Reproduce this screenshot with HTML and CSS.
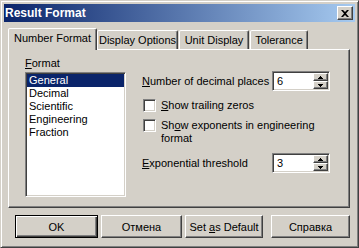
FILE: index.html
```html
<!DOCTYPE html>
<html lang="en">
<head>
    <meta charset="UTF-8">
    <title>Result Format</title>
    <link rel="stylesheet" href="styles.css">
</head>
<body>
    <div class="window">
        <div class="titlebar">
            <span class="title">Result Format</span>
            <div class="close-btn">
                <svg width="8" height="7" viewBox="0 0 8 7" xmlns="http://www.w3.org/2000/svg">
                    <path d="M0 0h2l2 2 2-2h2L5 3.5 8 7H6L4 5 2 7H0l3-3.5z" fill="#000"/>
                </svg>
            </div>
        </div>
        <div class="tabs">
            <div class="tab tab-number active">Number Format</div>
            <div class="tab tab-display">Display Options</div>
            <div class="tab tab-unit">Unit Display</div>
            <div class="tab tab-tolerance">Tolerance</div>
        </div>
        <div class="panel">
            <div class="format-col">
                <div class="field-label"><u>F</u>ormat</div>
                <ul class="listbox">
                    <li class="selected">General</li>
                    <li>Decimal</li>
                    <li>Scientific</li>
                    <li>Engineering</li>
                    <li>Fraction</li>
                </ul>
            </div>
            <div class="options-col">
                <div class="spin-row">
                    <span class="spin-label"><u>N</u>umber of decimal places</span>
                    <div class="spin">
                        <span class="spin-value">6</span>
                        <div class="spin-btns">
                            <span class="spin-btn"><svg width="5" height="3" viewBox="0 0 5 3"><path d="M2 0h1v1H2zM1 1h3v1H1zM0 2h5v1H0z"/></svg></span>
                            <span class="spin-btn"><svg width="5" height="3" viewBox="0 0 5 3"><path d="M0 0h5v1H0zM1 1h3v1H1zM2 2h1v1H2z"/></svg></span>
                        </div>
                    </div>
                </div>
                <div class="check-row check-trailing">
                    <span class="checkbox"></span>
                    <span class="check-label"><u>S</u>how trailing zeros</span>
                </div>
                <div class="check-row check-exponents">
                    <span class="checkbox"></span>
                    <span class="check-label">Sh<u>o</u>w exponents in engineering<br>format</span>
                </div>
                <div class="spin-row threshold-row">
                    <span class="spin-label"><u>E</u>xponential threshold</span>
                    <div class="spin">
                        <span class="spin-value">3</span>
                        <div class="spin-btns">
                            <span class="spin-btn"><svg width="5" height="3" viewBox="0 0 5 3"><path d="M2 0h1v1H2zM1 1h3v1H1zM0 2h5v1H0z"/></svg></span>
                            <span class="spin-btn"><svg width="5" height="3" viewBox="0 0 5 3"><path d="M0 0h5v1H0zM1 1h3v1H1zM2 2h1v1H2z"/></svg></span>
                        </div>
                    </div>
                </div>
            </div>
        </div>
        <div class="buttons">
            <button class="btn btn-ok default">OK</button>
            <button class="btn btn-cancel">Отмена</button>
            <button class="btn btn-default">Set <u>a</u>s Default</button>
            <button class="btn btn-help">Справка</button>
        </div>
    </div>
</body>
</html>
```

FILE: styles.css
```css
body {
    margin: 0;
    background: #d4d0c8;
    font-family: 'Liberation Sans', Arial, sans-serif;
    font-size: 11px;
    color: #000;
}
.window {
    width: 359px;
    height: 248px;
    box-sizing: border-box;
    padding: 3px;
    background: #d4d0c8;
    border: 1px solid;
    border-color: #d4d0c8 #404040 #404040 #d4d0c8;
    box-shadow: inset 1px 1px #fff, inset -1px -1px #808080;
}
.titlebar {
    height: 18px;
    display: flex;
    align-items: center;
    justify-content: space-between;
    padding: 0 2px 0 1px;
    background: linear-gradient(to right, #0a246a, #a6caf0);
}
.title {
    color: #fff;
    font-weight: bold;
    font-size: 12px;
}
.close-btn {
    width: 16px;
    height: 14px;
    box-sizing: border-box;
    display: flex;
    align-items: center;
    justify-content: center;
    background: #d4d0c8;
    border: 1px solid;
    border-color: #fff #404040 #404040 #fff;
    box-shadow: inset -1px -1px #808080;
}
.close-btn svg {
    margin-left: -1px;
}

/* tabs */
.tabs {
    display: flex;
    align-items: flex-end;
    height: 21px;
    margin: 6px 0 0 4px;
}
.tab {
    height: 19px;
    box-sizing: border-box;
    display: flex;
    align-items: center;
    justify-content: center;
    background: #d4d0c8;
    border: 1px solid;
    border-bottom: none;
    border-color: #fff #404040 transparent #fff;
    border-radius: 2px 2px 0 0;
    box-shadow: inset -1px 0 #808080;
    padding-bottom: 1px;
}
.tab.active {
    position: relative;
    z-index: 1;
    height: 22px;
    margin-bottom: -1px;
    padding-bottom: 4px;
}
.tab-number { width: 89px; }
.tab-display { width: 81px; }
.tab-unit { width: 70px; margin-left: 1px; }
.tab-tolerance { width: 58px; margin-left: 1px; }

/* panel */
.panel {
    display: flex;
    width: 342px;
    height: 159px;
    box-sizing: border-box;
    margin-left: 4px;
    border: 1px solid;
    border-color: #fff #404040 #404040 #fff;
    box-shadow: inset -1px -1px #808080;
}
.format-col {
    padding: 7px 0 0 16px;
}
.field-label {
    line-height: 13px;
    margin-bottom: 2px;
}
.listbox {
    list-style: none;
    margin: 0;
    width: 101px;
    height: 125px;
    box-sizing: border-box;
    background: #fff;
    border: 1px solid;
    border-color: #808080 #fff #fff #808080;
    box-shadow: inset 1px 1px #404040, inset -1px -1px #d4d0c8;
    padding: 1px;
}
.listbox li {
    line-height: 13px;
    padding-left: 2px;
}
.listbox li.selected {
    background: #0a246a;
    color: #fff;
}

.options-col {
    padding: 21px 0 0 16px;
}
.spin-row {
    display: flex;
    align-items: center;
}
.spin-label {
    width: 130px;
}
.spin {
    width: 58px;
    height: 20px;
    box-sizing: border-box;
    display: flex;
    justify-content: space-between;
    background: #fff;
    border: 1px solid;
    border-color: #808080 #fff #fff #808080;
    box-shadow: inset 1px 1px #404040, inset -1px -1px #d4d0c8;
    padding: 1px;
}
.spin-value {
    padding: 2px 0 0 3px;
}
.spin-btns {
    display: flex;
    flex-direction: column;
    width: 15px;
}
.spin-btn {
    height: 8px;
    box-sizing: border-box;
    display: flex;
    align-items: center;
    justify-content: center;
    background: #d4d0c8;
    border: 1px solid;
    border-color: #fff #404040 #404040 #fff;
    box-shadow: inset -1px -1px #808080;
}
.spin-btn svg {
    display: block;
}

.check-row {
    display: flex;
    align-items: flex-start;
}
.check-trailing { margin-top: 8px; }
.check-exponents { margin-top: 7px; }
.checkbox {
    width: 13px;
    height: 13px;
    box-sizing: border-box;
    flex: none;
    margin-left: 1px;
    background: #fff;
    border: 1px solid;
    border-color: #808080 #fff #fff #808080;
    box-shadow: inset 1px 1px #404040, inset -1px -1px #d4d0c8;
}
.check-label {
    line-height: 13px;
    margin-left: 5px;
}
.threshold-row {
    margin-top: 8px;
}

/* buttons */
.buttons {
    display: flex;
    margin: 7px 0 0 11px;
}
.btn {
    height: 23px;
    box-sizing: border-box;
    padding: 0;
    font-family: inherit;
    font-size: 11px;
    color: #000;
    background: #d4d0c8;
    border: 1px solid;
    border-color: #fff #404040 #404040 #fff;
    box-shadow: inset -1px -1px #808080;
}
.btn.default {
    border-color: #000;
    box-shadow: inset 1px 1px #fff, inset -1px -1px #404040, inset -2px -2px #808080;
}
.btn-ok { width: 83px; }
.btn-cancel { width: 81px; margin-left: 3px; }
.btn-default { width: 78px; margin-left: 3px; }
.btn-help { width: 79px; margin-left: 8px; }
```
